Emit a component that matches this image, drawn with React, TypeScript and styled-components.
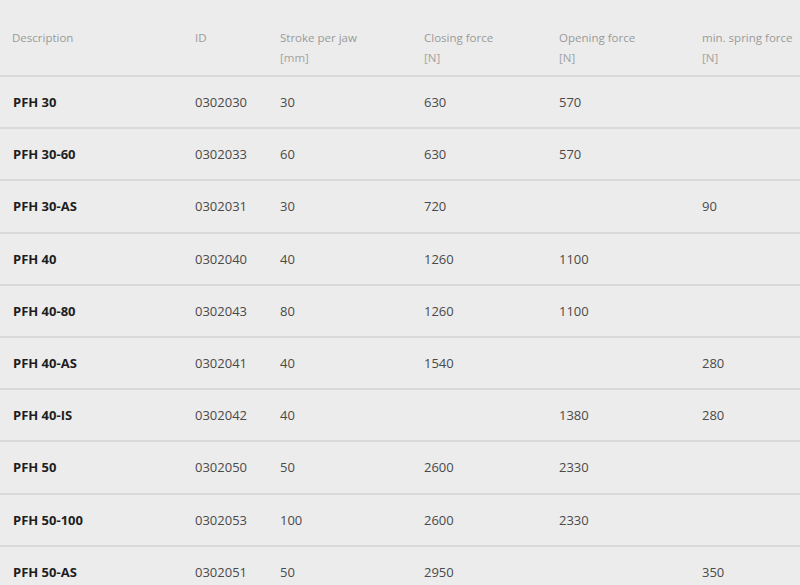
import styled, { createGlobalStyle } from "styled-components";

type Row = {
  name: string;
  id: string;
  stroke: string;
  closing: string;
  opening: string;
  spring: string;
};

const rows: Row[] = [
  { name: "PFH 30", id: "0302030", stroke: "30", closing: "630", opening: "570", spring: "" },
  { name: "PFH 30-60", id: "0302033", stroke: "60", closing: "630", opening: "570", spring: "" },
  { name: "PFH 30-AS", id: "0302031", stroke: "30", closing: "720", opening: "", spring: "90" },
  { name: "PFH 40", id: "0302040", stroke: "40", closing: "1260", opening: "1100", spring: "" },
  { name: "PFH 40-80", id: "0302043", stroke: "80", closing: "1260", opening: "1100", spring: "" },
  { name: "PFH 40-AS", id: "0302041", stroke: "40", closing: "1540", opening: "", spring: "280" },
  { name: "PFH 40-IS", id: "0302042", stroke: "40", closing: "", opening: "1380", spring: "280" },
  { name: "PFH 50", id: "0302050", stroke: "50", closing: "2600", opening: "2330", spring: "" },
  { name: "PFH 50-100", id: "0302053", stroke: "100", closing: "2600", opening: "2330", spring: "" },
  { name: "PFH 50-AS", id: "0302051", stroke: "50", closing: "2950", opening: "", spring: "350" },
];

const headers = [
  { label: "Description", unit: "" },
  { label: "ID", unit: "" },
  { label: "Stroke per jaw", unit: "[mm]" },
  { label: "Closing force", unit: "[N]" },
  { label: "Opening force", unit: "[N]" },
  { label: "min. spring force", unit: "[N]" },
];

export default function App() {
  return (
    <>
      <GlobalStyle />
      <Table>
        <HeaderRow>
          {headers.map((h) => (
            <HeadCell key={h.label}>
              <div>{h.label}</div>
              <Unit>{h.unit || "\u00a0"}</Unit>
            </HeadCell>
          ))}
        </HeaderRow>
        {rows.map((r) => (
          <BodyRow key={r.id}>
            <Cell $bold>{r.name}</Cell>
            <Cell>{r.id}</Cell>
            <Cell>{r.stroke}</Cell>
            <Cell>{r.closing}</Cell>
            <Cell>{r.opening}</Cell>
            <Cell>{r.spring}</Cell>
          </BodyRow>
        ))}
      </Table>
    </>
  );
}

const GlobalStyle = createGlobalStyle`
  html, body {
    margin: 0;
    padding: 0;
    background: #ececec;
    overflow: hidden;
  }
  body {
    font-family: "Open Sans", "Liberation Sans", sans-serif;
  }
`;

const Table = styled.div`
  width: 840px;
  background: #ececec;
`;

const columns = "183px 85px 144px 135px 143px 1fr";

const HeaderRow = styled.div`
  display: grid;
  grid-template-columns: ${columns};
  padding: 28px 0 7px 12px;
  border-bottom: 2px solid #d9d9d9;
`;

const HeadCell = styled.div`
  font-size: 11.5px;
  line-height: 20px;
  color: #9a9a9a;
  white-space: nowrap;
`;

const Unit = styled.div`
  color: #a3a3a3;
`;

const BodyRow = styled.div`
  display: grid;
  grid-template-columns: ${columns};
  align-items: center;
  height: 50.2px;
  padding-left: 12px;
  border-bottom: 2px solid #d9d9d9;
`;

const Cell = styled.div<{ $bold?: boolean }>`
  font-size: 13px;
  color: ${(p) => (p.$bold ? "#1e1e1e" : "#4a4a4a")};
  font-weight: ${(p) => (p.$bold ? 700 : 400)};
  padding-left: ${(p) => (p.$bold ? "1px" : "0")};
  white-space: nowrap;
`;
